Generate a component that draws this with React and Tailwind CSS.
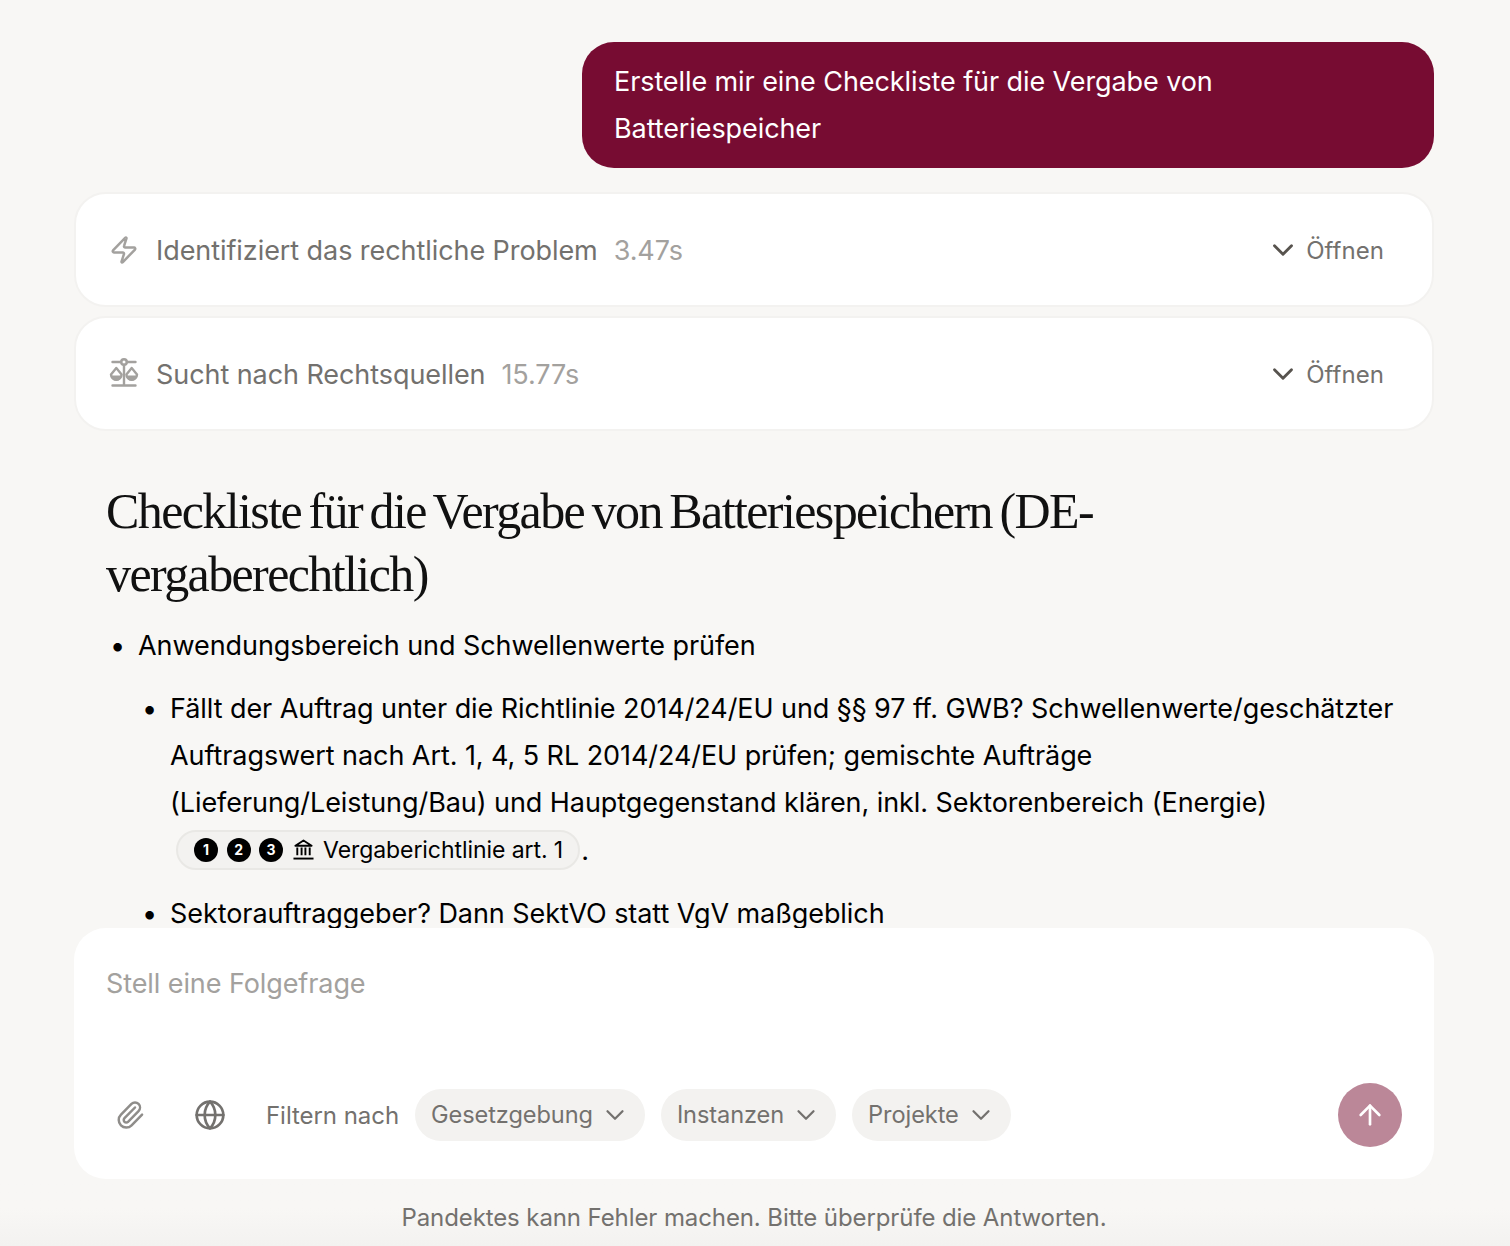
import { ChevronDown, Zap, Paperclip, Globe, ArrowUp } from "lucide-react"

function ScaleIcon({ className }) {
  return (
    <svg viewBox="0 0 30 30" fill="none" stroke="currentColor" strokeWidth="2.4" strokeLinejoin="round" strokeLinecap="round" className={`overflow-visible ${className}`}>
      <circle cx="15" cy="3" r="2.8" />
      <path d="M3.5 3h8.7M17.8 3h8.7M15 5.8V26M3.5 26.5h23" />
      <path d="M7.3 9 2 15.5a5.3 5.3 0 0 0 10.6 0Z" />
      <path d="M22.7 9 17.4 15.5a5.3 5.3 0 0 0 10.6 0Z" />
      <path d="M2 16.5a5.3 5.3 0 0 0 10.6 0ZM17.4 16.5a5.3 5.3 0 0 0 10.6 0Z" fill="currentColor" stroke="none" />
    </svg>
  )
}

function BankIcon({ className }) {
  return (
    <svg viewBox="0 0 22 22" fill="none" stroke="currentColor" strokeWidth="2" strokeLinejoin="round" className={className}>
      <path d="M2.5 7 11 1.5 19.5 7Z" />
      <path d="M4.5 9v8M9 9v8M13 9v8M17.5 9v8" />
      <path d="M0.5 20.5h21" />
    </svg>
  )
}

function StepCard({ icon: Icon, label, time }) {
  return (
    <div className="flex h-[115px] items-center rounded-[32px] border-2 border-[#f3f2f0] bg-white pl-[33px] pr-[48px] text-[#73716e]">
      <Icon className="h-[30px] w-[30px] text-[#a3a19e]" strokeWidth={2} />
      <span className="ml-[17px] mt-[4px] text-[27px] tracking-[-0.07px]">{label}</span>
      <span className="ml-[16px] mt-[4px] text-[27px] tracking-[-0.09px] text-[#a3a19e]">{time}</span>
      <ChevronDown className="ml-auto h-[34px] w-[34px] text-[#57534e]" strokeWidth={2} />
      <span className="ml-[6px] mt-[3px] text-[24px] tracking-[0.05px]">Öffnen</span>
    </div>
  )
}

function Filter({ label }) {
  return (
    <button className="flex h-[52px] items-center gap-[7px] rounded-full bg-[#f3f2f0] pl-[16px] pr-[15px] text-[23.6px] tracking-[-0.1px] text-[#73716e]">
      {label}
      <ChevronDown className="h-[30px] w-[30px]" strokeWidth={1.8} />
    </button>
  )
}

function Num({ n }) {
  return (
    <span className="flex h-[24px] w-[24px] items-center justify-center rounded-full bg-black text-[14px] font-bold text-white">
      {n}
    </span>
  )
}

export default function App() {
  return (
    <div className="flex h-[1246px] flex-col overflow-hidden bg-[#f8f7f5] font-['Inter',sans-serif] tracking-[-0.09px] text-black">
      <div className="min-h-0 flex-1 overflow-hidden pl-[74px] pr-[76px] pt-[42px]">
        <div className="flex justify-end">
          <div className="w-[852px] rounded-[32px] bg-[#770c32] px-[32px] py-[16px] text-[27px] leading-[47px] text-white">
            Erstelle mir eine Checkliste für die Vergabe von Batteriespeicher
          </div>
        </div>

        <div className="mt-[24px] flex flex-col gap-[9px]">
          <StepCard icon={Zap} label="Identifiziert das rechtliche Problem" time="3.47s" />
          <StepCard icon={ScaleIcon} label="Sucht nach Rechtsquellen" time="15.77s" />
        </div>

        <div className="pl-[32px] pr-[20px] pt-[49px]">
          <h1 className="font-['Liberation_Serif',serif] text-[50px] leading-[63px] tracking-[-1.6px] [word-spacing:-3.4px] text-[#111]">
            Checkliste für die Vergabe von Batteriespeichern (DE-vergaberechtlich)
          </h1>
          <ul className="mt-[16px] text-[27px] leading-[47px] tracking-[-0.07px]">
            <li className="flex">
              <span className="w-[32px] pl-[4px]">•</span>
              <span>Anwendungsbereich und Schwellenwerte prüfen</span>
            </li>
            <li className="mt-[16px] flex pl-[32px]">
              <span className="w-[32px] shrink-0 pl-[4px]">•</span>
              <div>
                Fällt der Auftrag unter die Richtlinie 2014/24/EU und §§ 97 ff. GWB? Schwellenwerte/geschätzter
                Auftragswert nach Art. 1, 4, 5 RL 2014/24/EU prüfen; gemischte Aufträge (Lieferung/Leistung/Bau) und
                Hauptgegenstand klären, inkl. Sektorenbereich (Energie)
                <div className="mt-[1px] flex items-center">
                  <span className="-mt-[2px] ml-[6px] flex h-[40px] items-center gap-[8.5px] rounded-full border-2 border-[#e9e8e5] bg-[#f3f2f0] pl-[16px] pr-[15px] text-[23px]">
                    <Num n="1" />
                    <Num n="2" />
                    <Num n="3" />
                    <BankIcon className="ml-[1px] h-[21px] w-[21px]" />
                    <span className="ml-[1px] mt-[1px]">Vergaberichtlinie art. 1</span>
                  </span>
                  <span className="ml-[1px]">.</span>
                </div>
              </div>
            </li>
            <li className="mt-[16px] flex pl-[32px]">
              <span className="w-[32px] shrink-0 pl-[4px]">•</span>
              <span>Sektorauftraggeber? Dann SektVO statt VgV maßgeblich</span>
            </li>
          </ul>
        </div>
      </div>

      <div className="ml-[74px] mr-[76px] flex h-[251px] shrink-0 flex-col rounded-[32px] bg-white pb-[32px] pl-[32px] pr-[32px] pt-[35px]">
        <div className="text-[27px] leading-[42px] text-[#a3a19e]">Stell eine Folgefrage</div>
        <div className="mt-auto flex items-center">
          <Paperclip className="ml-[9px] h-[30px] w-[30px] text-[#8f8d8a]" strokeWidth={2} />
          <Globe className="ml-[49px] h-[32px] w-[32px] text-[#73716e]" strokeWidth={2} />
          <span className="ml-[40px] mt-[2px] text-[24px] tracking-[-0.05px] text-[#73716e]">Filtern nach</span>
          <div className="ml-[16px] flex gap-[16px]">
            <Filter label="Gesetzgebung" />
            <Filter label="Instanzen" />
            <Filter label="Projekte" />
          </div>
          <button className="ml-auto flex h-[64px] w-[64px] items-center justify-center rounded-full bg-[#bb8798]">
            <ArrowUp className="h-[32px] w-[32px] text-white" strokeWidth={2} />
          </button>
        </div>
      </div>

      <div className="flex h-[67px] shrink-0 items-center justify-center bg-gradient-to-b from-[#f8f7f5] from-[45%] to-[#f3f2f0] pt-[11px] text-[24px] tracking-[-0.1px] text-[#73716e]">
        <span className="-ml-[2px]">Pandektes kann Fehler machen. Bitte überprüfe die Antworten.</span>
      </div>
    </div>
  )
}
